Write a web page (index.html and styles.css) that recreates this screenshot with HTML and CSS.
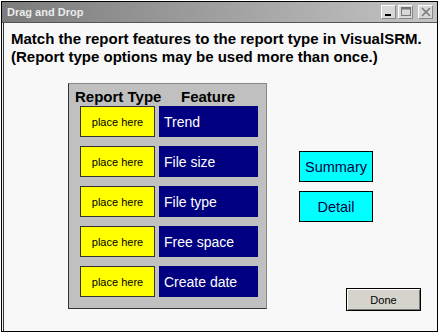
FILE: index.html
```html
<!DOCTYPE html>
<html lang="en">
<head>
    <meta charset="UTF-8">
    <title>Drag and Drop</title>
    <link rel="stylesheet" href="styles.css">
</head>
<body>

    <div class="window">
        <!-- Title bar -->
        <div class="titlebar">
            <span class="title">Drag and Drop</span>
            <div class="title-btns">
                <span class="tbtn"><svg width="10" height="10" viewBox="0 0 10 10"><rect x="1" y="7" width="6" height="2" fill="#000"/></svg></span>
                <span class="tbtn"><svg width="10" height="10" viewBox="0 0 10 10"><rect x="0.5" y="0.5" width="9" height="8" fill="none" stroke="#777"/><rect x="0.5" y="0.5" width="9" height="2" fill="#777"/></svg></span>
                <span class="tbtn gap"><svg width="10" height="10" viewBox="0 0 10 10"><path d="M1 1 L9 9 M9 1 L1 9" stroke="#777" stroke-width="1.5"/></svg></span>
            </div>
        </div>

        <div class="content">
            <h1>Match the report features to the report type in VisualSRM.<br>(Report type options may be used more than once.)</h1>

            <div class="main">
                <div class="panel">
                    <div class="panel-head">
                        <span>Report Type</span>
                        <span>Feature</span>
                    </div>
                    <div class="row"><div class="drop">place here</div><div class="feature">Trend</div></div>
                    <div class="row"><div class="drop">place here</div><div class="feature">File size</div></div>
                    <div class="row"><div class="drop">place here</div><div class="feature">File type</div></div>
                    <div class="row"><div class="drop">place here</div><div class="feature">Free space</div></div>
                    <div class="row"><div class="drop">place here</div><div class="feature">Create date</div></div>
                </div>

                <div class="side">
                    <div class="options">
                        <div class="option">Summary</div>
                        <div class="option">Detail</div>
                    </div>
                    <button class="done">Done</button>
                </div>
            </div>
        </div>
    </div>

</body>
</html>
```

FILE: styles.css
```css
* {
    margin: 0;
    padding: 0;
    box-sizing: border-box;
    font-family: 'Liberation Sans', Arial, sans-serif;
}
body {
    background: #fff;
    width: 440px;
    height: 333px;
}
.window {
    margin: 1px 2px 0 1px;
    height: 331px;
    border: 1px solid #000;
    display: flex;
    flex-direction: column;
    background: #f8f8f8;
}
.titlebar {
    height: 21px;
    display: flex;
    align-items: center;
    justify-content: space-between;
    padding: 0 4px 0 5px;
    background: linear-gradient(to right, #7c7c7c, #a0a0a0 50%, #c4c4c4);
    border-bottom: 1px solid #555;
}
.title {
    color: #ececec;
    font-size: 11px;
    font-weight: bold;
}
.title-btns {
    display: flex;
    gap: 2px;
}
.tbtn {
    width: 15px;
    height: 14px;
    background: #d8d8d8;
    border: 1px solid;
    border-color: #fff #888 #888 #fff;
    display: flex;
    align-items: center;
    justify-content: center;
}
.tbtn.gap {
    margin-left: 3px;
}
.content {
    flex: 1;
    display: flex;
    flex-direction: column;
    border-left: 1px solid #333;
    margin-left: 1px;
}
h1 {
    font-size: 15px;
    font-weight: bold;
    line-height: 18px;
    color: #000;
    padding: 7px 0 0 7px;
}
.main {
    flex: 1;
    display: flex;
    padding: 17px 16px 20px 64px;
}
.panel {
    width: 199px;
    height: 226px;
    background: #c0c0c0;
    border: 1px solid #888;
    border-left-color: #333;
    border-bottom-color: #333;
    padding: 2px 8px 10px 11px;
}
.panel-head {
    display: flex;
    font-size: 15px;
    font-weight: bold;
    height: 20px;
    align-items: center;
    margin-left: -5px;
}
.panel-head span:first-child {
    width: 106px;
}
.row {
    display: flex;
    gap: 4px;
    margin-top: 9px;
}
.panel-head + .row {
    margin-top: 0;
}
.drop {
    width: 75px;
    height: 31px;
    background: #ffff00;
    border: 1px solid #333;
    font-size: 11px;
    display: flex;
    align-items: center;
    justify-content: center;
}
.feature {
    width: 99px;
    height: 31px;
    background: #000080;
    color: #fff;
    font-size: 14px;
    display: flex;
    align-items: center;
    padding-left: 5px;
}
.side {
    flex: 1;
    display: flex;
    flex-direction: column;
}
.options {
    margin: 68px 0 0 32px;
    display: flex;
    flex-direction: column;
    gap: 9px;
}
.option {
    width: 74px;
    height: 31px;
    background: #00ffff;
    border: 1px solid #000;
    color: #000040;
    font-size: 14.5px;
    display: flex;
    align-items: center;
    justify-content: center;
}
.done {
    margin-top: auto;
    align-self: flex-end;
    width: 75px;
    height: 23px;
    background: #d4d4cc;
    border: 1px solid #000;
    box-shadow: inset 1px 1px 0 #fff, inset -1px -1px 0 #777;
    font-size: 11px;
    color: #000;
}
```
